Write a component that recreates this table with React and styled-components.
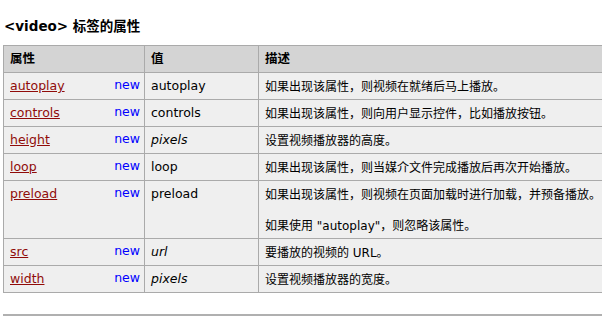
import React from "react";
import styled, { createGlobalStyle } from "styled-components";

const GlobalStyle = createGlobalStyle`
  body {
    margin: 0;
    background: #fff;
    color: #000;
    font-family: "DejaVu Sans", "Noto Sans CJK SC", sans-serif;
    font-size: 12.5px;
  }
`;

const StyledPage = styled.div`
  padding: 0 0 0 3px;
  overflow: hidden;
`;
const StyledTitle = styled.h2`
  margin: 17px 0 10px 1px;
  font-size: 13.5px;
  line-height: 18px;
  font-weight: bold;
`;
const StyledTable = styled.table`
  width: 640px;
  border-collapse: collapse;
  border: 1px solid #aaa;
  table-layout: fixed;
`;
const StyledTh = styled.th`
  width: ${(p) => p.$width || "auto"};
  background: #d4d4d4;
  border: 1px solid #aaa;
  padding: 5px 5px 5px 6px;
  text-align: left;
  font-weight: bold;
  font-size: 12.5px;
  line-height: 16px;
  vertical-align: top;
`;
const StyledTd = styled.td`
  background: #efefef;
  border: 1px solid #aaa;
  padding: 5px 5px 5px 6px;
  line-height: 16px;
  vertical-align: top;
  white-space: nowrap;
  font-size: ${(p) => (p.$cjk ? "12px" : "12.5px")};
  font-style: ${(p) => (p.$italic ? "italic" : "normal")};
`;
const StyledAttrCell = styled.div`
  display: flex;
  justify-content: space-between;
  align-items: flex-start;
`;
const StyledAttrLink = styled.a`
  color: #900b09;
  text-decoration: underline;
  cursor: pointer;
`;
const StyledNew = styled.span`
  color: #0000ff;
  margin-top: -1px;
  margin-right: -1px;
`;
const StyledDesc = styled.p`
  margin: 0;
  position: relative;
  top: 1px;
  & + & {
    margin-top: 15px;
  }
`;
const StyledRule = styled.hr`
  margin: 21px 0 0;
  width: 640px;
  border: none;
  height: 2px;
  background: #b0b0b0;
`;

const rows = [
  { name: "autoplay", value: "autoplay", desc: ["如果出现该属性，则视频在就绪后马上播放。"] },
  { name: "controls", value: "controls", desc: ["如果出现该属性，则向用户显示控件，比如播放按钮。"] },
  { name: "height", value: "pixels", italic: true, desc: ["设置视频播放器的高度。"] },
  { name: "loop", value: "loop", desc: ["如果出现该属性，则当媒介文件完成播放后再次开始播放。"] },
  {
    name: "preload",
    value: "preload",
    desc: ["如果出现该属性，则视频在页面加载时进行加载，并预备播放。", "如果使用 \"autoplay\"，则忽略该属性。"],
  },
  { name: "src", value: "url", italic: true, desc: ["要播放的视频的 URL。"] },
  { name: "width", value: "pixels", italic: true, desc: ["设置视频播放器的宽度。"] },
];

const App = () => {
  return (
    <StyledPage>
      <GlobalStyle />
      <StyledTitle>&lt;video&gt; 标签的属性</StyledTitle>
      <StyledTable>
        <thead>
          <tr>
            <StyledTh $width="129px">属性</StyledTh>
            <StyledTh $width="102px">值</StyledTh>
            <StyledTh>描述</StyledTh>
          </tr>
        </thead>
        <tbody>
          {rows.map((row) => (
            <tr key={row.name}>
              <StyledTd>
                <StyledAttrCell>
                  <StyledAttrLink>{row.name}</StyledAttrLink>
                  <StyledNew>new</StyledNew>
                </StyledAttrCell>
              </StyledTd>
              <StyledTd $italic={row.italic}>{row.value}</StyledTd>
              <StyledTd $cjk>
                {row.desc.map((text) => (
                  <StyledDesc key={text}>{text}</StyledDesc>
                ))}
              </StyledTd>
            </tr>
          ))}
        </tbody>
      </StyledTable>
      <StyledRule />
    </StyledPage>
  );
};

export default App;
